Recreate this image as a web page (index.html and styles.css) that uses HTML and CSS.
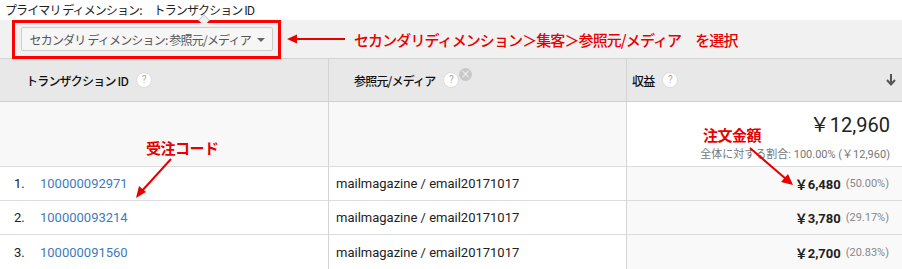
FILE: index.html
```html
<!DOCTYPE html>
<html lang="ja">
<head>
<meta charset="utf-8">
<link rel="stylesheet" href="styles.css">
</head>
<body>
<div class="page">
  <div class="primary">
    <span class="pl">プライマリ ディメンション:</span>
    <span class="pv">トランザクション ID<span class="caret"></span></span>
  </div>
  <div class="bar">
    <div class="redbox">
      <div class="btn">セカンダリ ディメンション: 参照元/メディア<span class="tri"></span></div>
    </div>
    <svg class="arrow1" width="60" height="12" viewBox="0 0 60 12"><line x1="4" y1="6" x2="58" y2="6" stroke="#e60000" stroke-width="2"/><path d="M0 6 L10 1.5 L10 10.5 Z" fill="#e60000"/></svg>
    <div class="note1">セカンダリディメンション＞集客＞参照元/メディア　を選択</div>
  </div>
  <div class="table">
    <div class="hd c1"><span class="ht">トランザクション ID</span><span class="q">?</span></div>
    <div class="hd c2"><span class="ht">参照元/メディア</span><span class="q">?</span><span class="x">×</span></div>
    <div class="hd c3"><span class="ht">収益</span><span class="q">?</span><span class="sort">
      <svg width="10" height="12" viewBox="0 0 10 12"><line x1="5" y1="0" x2="5" y2="10" stroke="#555" stroke-width="2"/><path d="M1 6 L5 10.5 L9 6" fill="none" stroke="#555" stroke-width="2"/></svg></span></div>

    <div class="sum c1"></div>
    <div class="sum c2"></div>
    <div class="sum c3">
      <div class="total">￥12,960</div>
      <div class="share">全体に対する割合: 100.00% (￥12,960)</div>
    </div>

    <div class="row c1"><span class="n">1.</span><span class="id">100000092971</span></div>
    <div class="row c2">mailmagazine / email20171017</div>
    <div class="row c3"><span class="v">￥6,480</span><span class="p">(50.00%)</span></div>

    <div class="row c1"><span class="n">2.</span><span class="id">100000093214</span></div>
    <div class="row c2">mailmagazine / email20171017</div>
    <div class="row c3"><span class="v">￥3,780</span><span class="p">(29.17%)</span></div>

    <div class="row c1 last"><span class="n">3.</span><span class="id">100000091560</span></div>
    <div class="row c2 last">mailmagazine / email20171017</div>
    <div class="row c3 last"><span class="v">￥2,700</span><span class="p">(20.83%)</span></div>
  </div>

  <div class="note2">受注コード</div>
  <svg class="arrow2" width="44" height="44" viewBox="0 0 44 44"><line x1="38" y1="2" x2="8" y2="35" stroke="#e60000" stroke-width="2"/><path d="M3 41 L6 29 L13 35 Z" fill="#e60000"/></svg>
  <div class="note3">注文金額</div>
  <svg class="arrow3" width="50" height="44" viewBox="0 0 50 44"><line x1="2" y1="2" x2="38" y2="33" stroke="#e60000" stroke-width="2"/><path d="M45 39 L33 36 L40 28 Z" fill="#e60000"/></svg>
</div>
</body>
</html>
```
FILE: styles.css
```css
html, body { margin: 0; padding: 0; background: #fff; }
body { font-family: Roboto, "Noto Sans CJK JP", sans-serif; font-size: 13px; color: #222; }
.page { position: relative; width: 902px; height: 269px; overflow: hidden; }

.primary { height: 20px; display: flex; align-items: center; padding-left: 5px; gap: 12px; font-family: "Noto Sans CJK JP", sans-serif; font-size: 12px; letter-spacing: -0.9px; line-height: 14px; color: #222; white-space: nowrap; }
.pv { position: relative; }
.caret { position: absolute; left: 50%; bottom: -7px; width: 7px; height: 7px; margin-left: -4px; background: #f1f1f1; border-left: 1px solid #ccc; border-top: 1px solid #ccc; transform: rotate(45deg); }

.bar { height: 39px; background: #f1f1f1; border-bottom: 1px solid #d4d4d4; display: flex; align-items: center; padding-left: 12px; box-sizing: border-box; }
.redbox { width: 263px; height: 33px; border: 3px solid #f00; box-sizing: content-box; display: flex; align-items: center; justify-content: center; flex: none; }
.btn { width: 252px; height: 24px; box-sizing: border-box; border: 1px solid #ccc; border-radius: 2px; background: #f6f6f6; display: flex; align-items: center; padding-left: 8px; font-family: "Noto Sans CJK JP", sans-serif; font-size: 12px; letter-spacing: -0.8px; color: #555; position: relative; white-space: nowrap; }
.tri { position: absolute; right: 7px; top: 10px; border-left: 4px solid transparent; border-right: 4px solid transparent; border-top: 4px solid #666; }
.arrow1 { margin-left: 6px; flex: none; }
.note1 { margin-left: 7px; font-family: "Noto Sans CJK JP", sans-serif; font-size: 15px; color: #e60000; font-weight: 500; letter-spacing: -0.9px; white-space: nowrap; }

.table { display: grid; grid-template-columns: 329px 298px 275px; grid-template-rows: 43px 65px 34px 34px 34px; }
.table > div { box-sizing: border-box; border-bottom: 1px solid #dcdcdc; }
.c1, .c2 { border-right: 1px solid #d4d4d4; }
.hd { background: #e8e8e8; display: flex; align-items: center; font-family: "Noto Sans CJK JP", sans-serif; font-size: 12px; letter-spacing: -0.8px; color: #111; border-bottom-color: #cfcfcf !important; position: relative; white-space: nowrap; }
.hd.c1 { padding-left: 26px; }
.hd.c2 { padding-left: 25px; }
.hd.c3 { padding-left: 5px; }
.ht { font-weight: 500; }
.q { width: 14px; height: 14px; border-radius: 50%; background: #fff; border: 1px solid #ddd; color: #aaa; font-family: Roboto, sans-serif; font-size: 10px; letter-spacing: 0; line-height: 14px; text-align: center; margin-left: 8px; }
.x { position: absolute; left: 130px; top: 9px; width: 13px; height: 13px; border-radius: 50%; background: #c8c8c8; color: #eee; font-size: 12px; letter-spacing: 0; line-height: 13px; text-align: center; font-family: "DejaVu Sans", sans-serif; }
.sort { margin-left: auto; margin-right: 6px; display: flex; }

.sum.c1, .sum.c2 { background: #f8f8f8; }
.sum.c3 { background: #fff; display: flex; flex-direction: column; align-items: flex-end; padding-right: 12px; padding-top: 11px; }
.total { font-size: 20px; line-height: 24px; color: #222; }
.share { margin-top: 8px; font-family: Roboto, "Noto Sans CJK JP", sans-serif; font-size: 11px; color: #777; }

.row { display: flex; align-items: center; }
.row.c1 { padding-left: 14px; }
.row.c2 { padding-left: 7px; color: #222; }
.row.c3 { background: #f9f9f9; justify-content: flex-end; padding-right: 13px; }
.row.last { border-bottom: none; }
.n { width: 26px; color: #222; }
.id { color: #3c7cbc; }
.v { font-weight: 700; color: #222; }
.p { margin-left: 5px; font-size: 11px; color: #888; }

.note2 { position: absolute; left: 146px; top: 138px; font-family: "Noto Sans CJK JP", sans-serif; font-size: 15px; font-weight: 700; color: #e60000; line-height: 20px; letter-spacing: -0.5px; }
.arrow2 { position: absolute; left: 133px; top: 157px; }
.note3 { position: absolute; left: 703px; top: 125px; font-family: "Noto Sans CJK JP", sans-serif; font-size: 15px; font-weight: 700; color: #e60000; line-height: 20px; letter-spacing: -0.5px; }
.arrow3 { position: absolute; left: 748px; top: 146px; }
```
